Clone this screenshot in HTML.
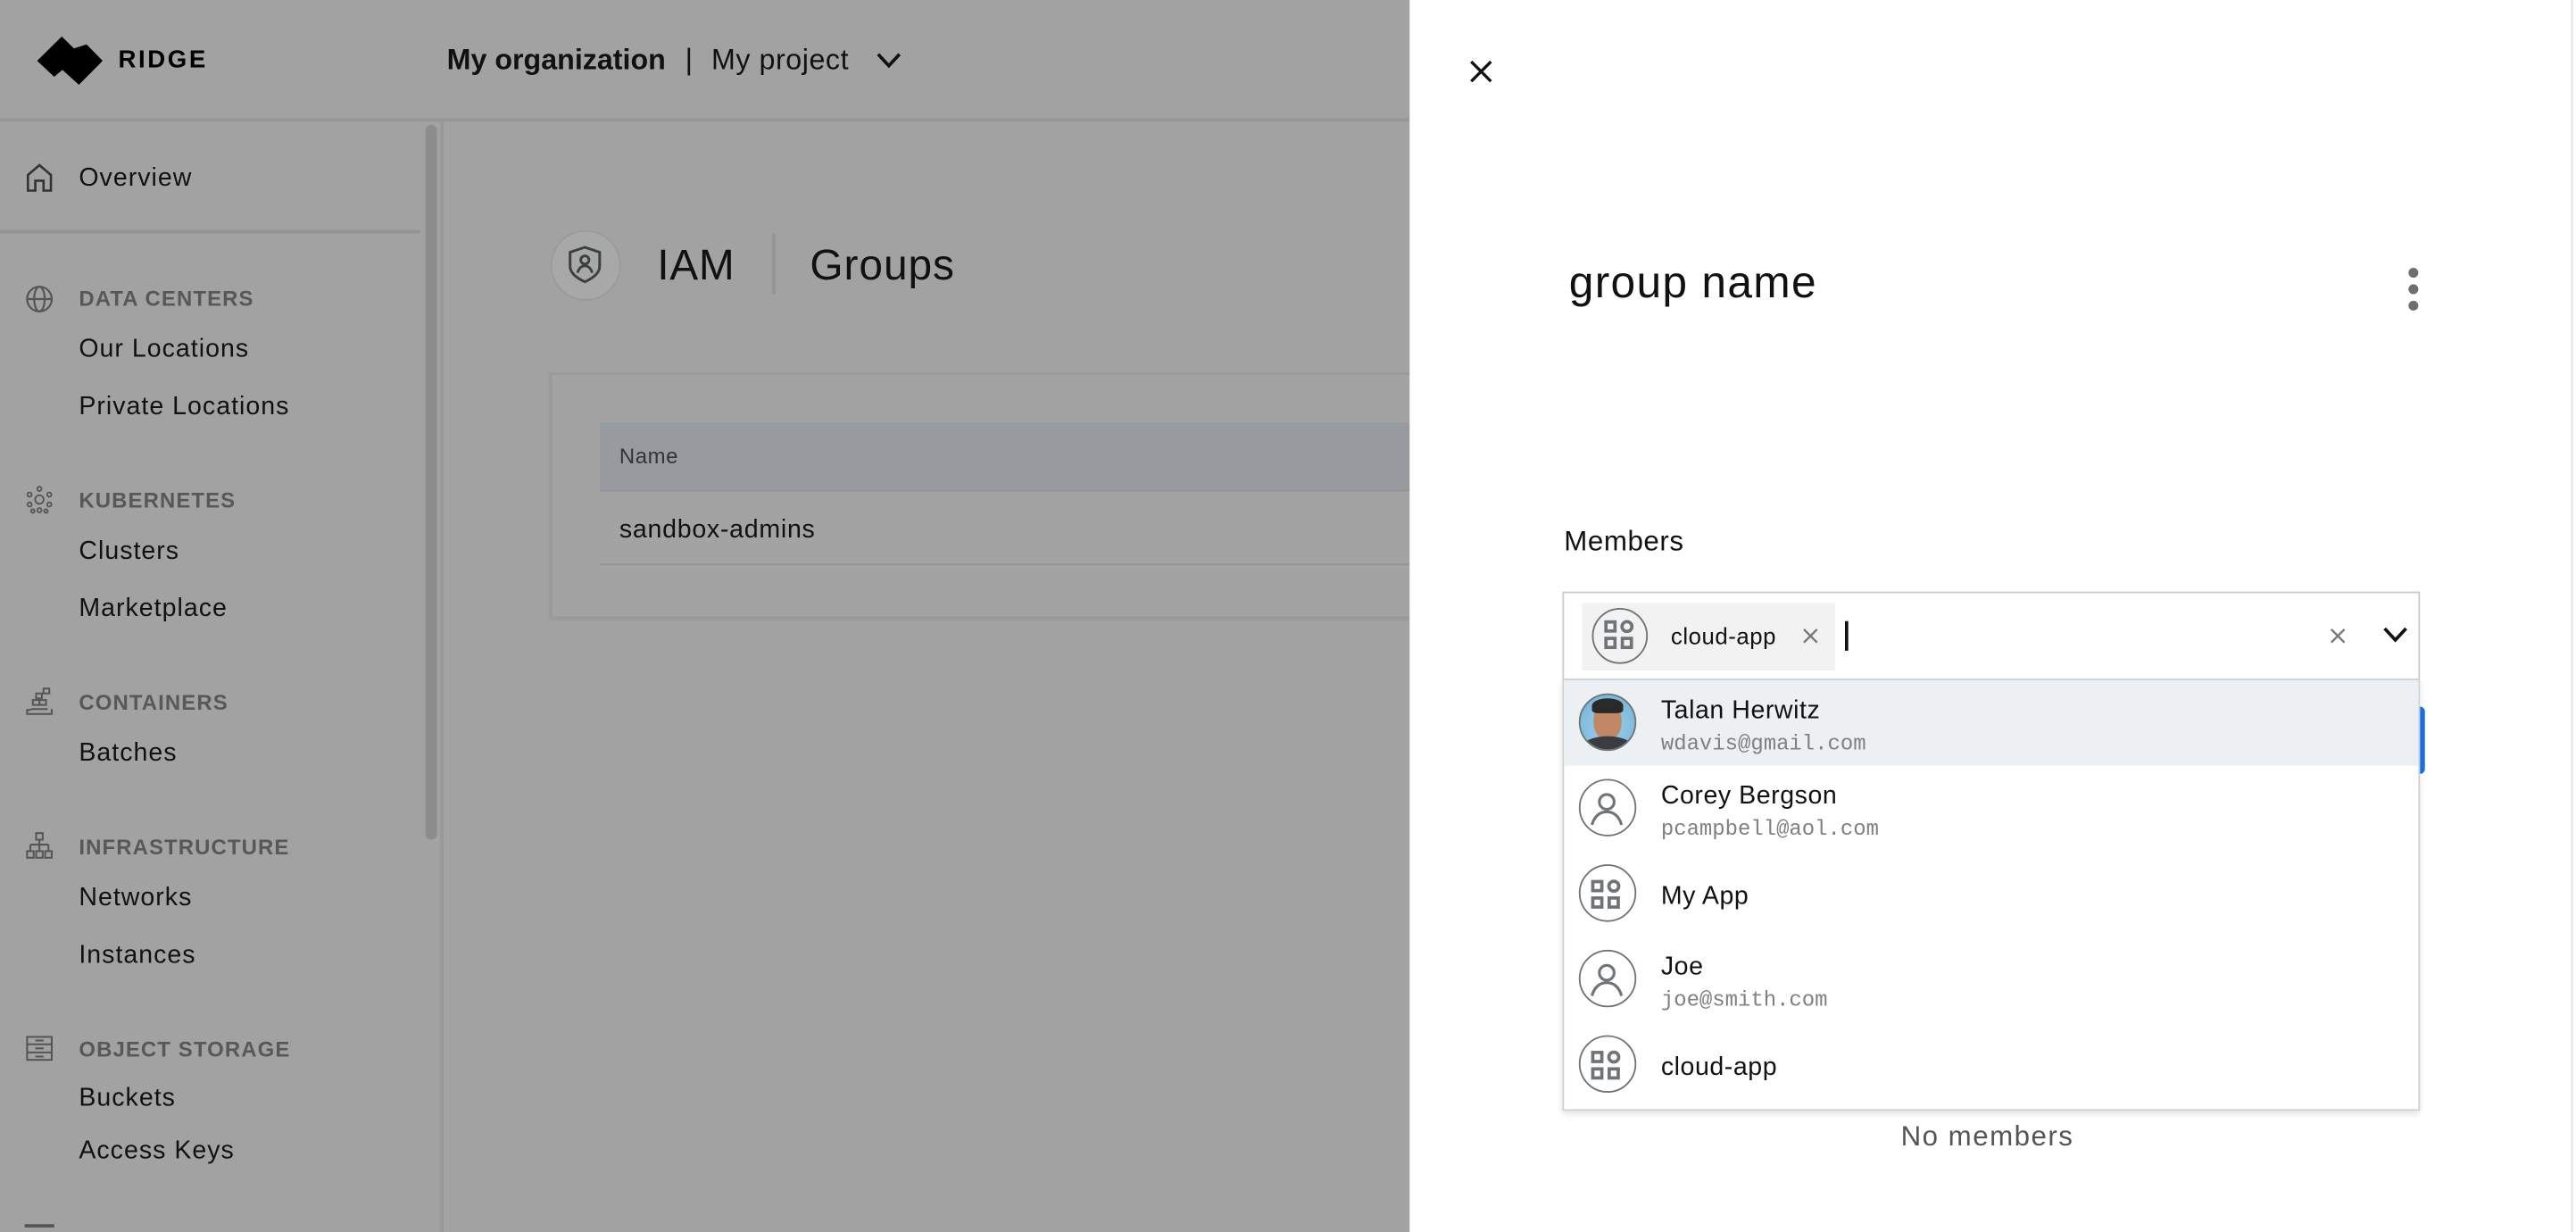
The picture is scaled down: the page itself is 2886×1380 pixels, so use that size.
<!DOCTYPE html>
<html><head><meta charset="utf-8">
<style>
html,body{margin:0;padding:0;width:2886px;height:1380px;overflow:hidden;background:#a2a2a2;}
#s{position:absolute;left:0;top:0;width:1568px;height:750px;transform:scale(1.8406);transform-origin:0 0;font-family:"Liberation Sans",sans-serif;color:#111;}
.a{position:absolute;}
.t{position:absolute;white-space:nowrap;line-height:1;}
.hd{font-size:13px;font-weight:bold;color:#585858;letter-spacing:0.6px;}
.it{font-size:15.5px;color:#111;letter-spacing:0.55px;}
.ic{position:absolute;left:15px;}
.row{position:absolute;left:952px;width:520px;height:52px;}
.av{position:absolute;left:9px;top:8px;width:33px;height:33px;border:1.6px solid #6f7478;border-radius:50%;box-sizing:content-box;}
.nm{position:absolute;left:59px;font-size:15.5px;color:#111;white-space:nowrap;letter-spacing:0.3px;}
.em{position:absolute;left:59px;font-family:"Liberation Mono",monospace;font-size:13px;color:#808080;white-space:nowrap;}
</style></head><body>
<div id="s">
<!-- header -->
<div class="a" style="left:0;top:72px;width:858px;height:1.5px;background:#969696"></div>
<svg class="a" style="left:0;top:0" width="70" height="60"><polygon points="22.6,37 37.6,22.2 45,29.5 52.7,27 62.5,37 48,51.6 38,42.5 33,46.7" fill="#000"/></svg>
<div class="t" style="left:72px;top:29px;font-size:15px;font-weight:bold;letter-spacing:1.4px;color:#000">RIDGE</div>
<div class="t" style="left:272px;top:28px;font-size:17.5px;font-weight:600;color:#111">My organization</div>
<div class="t" style="left:417px;top:27px;font-size:18px;color:#111">|</div>
<div class="t" style="left:433px;top:28px;font-size:17.5px;color:#111;letter-spacing:0.3px">My project</div>
<svg class="a" style="left:533px;top:31px" width="16" height="12"><path d="M1.5 2 L8 9 L14.5 2" stroke="#111" stroke-width="2" fill="none"/></svg>
<!-- sidebar -->
<div class="a" style="left:268px;top:73px;width:1.5px;height:677px;background:#979797"></div>
<div class="a" style="left:259px;top:76px;width:7px;height:435px;border-radius:4px;background:#8c8c8c"></div>
<div class="a" style="left:0;top:140px;width:256px;height:1.5px;background:#939393"></div>
<svg class="ic" style="top:99px" width="18" height="18"><path d="M2 17V7.5L9 1.5L16 7.5V17H11.5V11H6.5V17Z" stroke="#333" stroke-width="1.4" fill="none"/></svg>
<div class="t it" style="left:48px;top:101px">Overview</div>
<svg class="ic" style="top:173px" width="18" height="18"><circle cx="9" cy="9" r="7.5" stroke="#555" stroke-width="1.2" fill="none"/><ellipse cx="9" cy="9" rx="3.2" ry="7.5" stroke="#555" stroke-width="1.2" fill="none"/><path d="M1.5 9H16.5" stroke="#555" stroke-width="1.2"/></svg>
<div class="t hd" style="left:48px;top:175px">DATA CENTERS</div>
<div class="t it" style="left:48px;top:205px">Our Locations</div>
<div class="t it" style="left:48px;top:240px">Private Locations</div>
<svg class="ic" style="top:295px" width="18" height="18" fill="none" stroke="#555" stroke-width="1"><circle cx="9" cy="9" r="2.6"/><circle cx="9" cy="2.5" r="1.3"/><circle cx="9" cy="15.5" r="1.3"/><circle cx="3" cy="6" r="1.3"/><circle cx="15" cy="6" r="1.3"/><circle cx="3" cy="12" r="1.3"/><circle cx="15" cy="12" r="1.3"/><circle cx="5" cy="16" r="1.1"/><circle cx="13" cy="16" r="1.1"/></svg>
<div class="t hd" style="left:48px;top:298px">KUBERNETES</div>
<div class="t it" style="left:48px;top:328px">Clusters</div>
<div class="t it" style="left:48px;top:363px">Marketplace</div>
<svg class="ic" style="top:418px" width="18" height="18" fill="none" stroke="#555" stroke-width="1.1"><path d="M1.5 13.5V16.5H16.5V13.5"/><path d="M1.5 14H4"/><rect x="5" y="8" width="4" height="3"/><rect x="9" y="8" width="4" height="3"/><rect x="7" y="4" width="3.5" height="3"/><rect x="11.5" y="1" width="3.5" height="3"/><path d="M4 13.5H14"/></svg>
<div class="t hd" style="left:48px;top:421px">CONTAINERS</div>
<div class="t it" style="left:48px;top:451px">Batches</div>
<svg class="ic" style="top:506px" width="18" height="18" fill="none" stroke="#555" stroke-width="1.1"><rect x="7" y="1" width="4" height="4"/><path d="M9 5V8M3.5 8H14.5M3.5 8V12M9 8V12M14.5 8V12"/><rect x="1.5" y="12" width="4" height="4"/><rect x="7" y="12" width="4" height="4"/><rect x="12.5" y="12" width="4" height="4"/></svg>
<div class="t hd" style="left:48px;top:509px">INFRASTRUCTURE</div>
<div class="t it" style="left:48px;top:539px">Networks</div>
<div class="t it" style="left:48px;top:574px">Instances</div>
<svg class="ic" style="top:629px" width="18" height="18" fill="none" stroke="#555" stroke-width="1.1"><rect x="1.5" y="2" width="15" height="14"/><path d="M1.5 6.5H16.5M1.5 11.5H16.5M6.5 9H11.5M6.5 14H11.5M6.5 4.2H11.5"/></svg>
<div class="t hd" style="left:48px;top:632px">OBJECT STORAGE</div>
<div class="t it" style="left:48px;top:661px">Buckets</div>
<div class="t it" style="left:48px;top:693px">Access Keys</div>
<div class="a" style="left:15px;top:745px;width:18px;height:1.5px;background:#555"></div>
<!-- main -->
<div class="a" style="left:335px;top:140px;width:41px;height:41px;border-radius:50%;background:#a8a8a8;border:1px solid #9a9a9a"></div>
<svg class="a" style="left:345px;top:149px" width="22" height="24" fill="none" stroke="#3b4042" stroke-width="1.6"><path d="M2 4.5L11 1.5L20 4.5V13C20 17.5 15.5 20.5 11 22.5C6.5 20.5 2 17.5 2 13Z"/><circle cx="11" cy="9.2" r="2.5"/><path d="M6.5 17C7.5 14 9 12.8 11 12.8C13 12.8 14.5 14 15.5 17"/></svg>
<div class="t" style="left:400px;top:148px;font-size:26px;color:#111;letter-spacing:0.4px">IAM</div>
<div class="a" style="left:470px;top:142px;width:1.5px;height:37px;background:#959595"></div>
<div class="t" style="left:493px;top:148px;font-size:26px;color:#111;letter-spacing:0.5px">Groups</div>
<div class="a" style="left:335px;top:227px;width:530px;height:147px;background:#a3a3a3;border:1px solid #989898;box-shadow:0 1px 2px rgba(0,0,0,0.08)"></div>
<div class="a" style="left:365px;top:257px;width:500px;height:41px;background:#979b9f"></div>
<div class="t" style="left:377px;top:271px;font-size:13px;color:#333;letter-spacing:0.3px">Name</div>
<div class="a" style="left:365px;top:298px;width:500px;height:1px;background:#949494"></div>
<div class="t" style="left:377px;top:315px;font-size:15.5px;color:#111;letter-spacing:0.4px">sandbox-admins</div>
<div class="a" style="left:365px;top:343px;width:500px;height:1px;background:#949494"></div>
<!-- panel -->
<div class="a" style="left:858px;top:0;width:710px;height:750px;background:#fff"></div>
<div class="a" style="left:1565px;top:0;width:1px;height:750px;background:#e0e0e0"></div>
<svg class="a" style="left:894px;top:36px" width="15" height="15"><path d="M1.5 1.5L13.5 13.5M13.5 1.5L1.5 13.5" stroke="#111" stroke-width="1.8"/></svg>
<div class="t" style="left:955px;top:159px;font-size:27px;color:#111;letter-spacing:0.7px">group name</div>
<div class="a" style="left:1466px;top:163px;width:6px;height:6px;border-radius:50%;background:#6b7075"></div>
<div class="a" style="left:1466px;top:173px;width:6px;height:6px;border-radius:50%;background:#6b7075"></div>
<div class="a" style="left:1466px;top:183px;width:6px;height:6px;border-radius:50%;background:#6b7075"></div>
<div class="t" style="left:952px;top:321px;font-size:17px;font-weight:500;color:#111;letter-spacing:0.3px">Members</div>
<div class="a" style="left:1472px;top:430px;width:4px;height:41px;background:#1a73e8;border-radius:0 3px 3px 0"></div>
<div class="t" style="left:1157px;top:683px;font-size:17px;color:#555;letter-spacing:0.8px">No members</div>
<!-- input -->
<div class="a" style="left:951px;top:360px;width:520px;height:52px;border:1px solid #c8cacc;background:#fff"></div>
<div class="a" style="left:963px;top:367px;width:154px;height:41px;background:#f2f2f2"></div>
<div class="a" style="left:969px;top:370px;width:32px;height:32px;border:1.5px solid #6f7478;border-radius:50%"></div>
<svg class="a" style="left:976px;top:377px" width="20" height="20" fill="none" stroke="#6f7478" stroke-width="2"><rect x="1.5" y="1.5" width="5.5" height="5.5"/><circle cx="14.3" cy="4.3" r="3"/><rect x="1.5" y="11.5" width="5.5" height="5.5"/><rect x="11.5" y="11.5" width="5.5" height="5.5"/></svg>
<div class="t" style="left:1017px;top:380px;font-size:14px;color:#111;letter-spacing:0.3px">cloud-app</div>
<svg class="a" style="left:1097px;top:382px" width="10" height="10"><path d="M1 1L9 9M9 1L1 9" stroke="#777" stroke-width="1.3"/></svg>
<div class="a" style="left:1123px;top:378px;width:1.5px;height:18px;background:#111"></div>
<svg class="a" style="left:1418px;top:382px" width="10" height="10"><path d="M1 1L9 9M9 1L1 9" stroke="#777" stroke-width="1.3"/></svg>
<svg class="a" style="left:1450px;top:381px" width="16" height="11"><path d="M1.5 1.5L8 8.5L14.5 1.5" stroke="#111" stroke-width="2" fill="none"/></svg>
<!-- dropdown -->
<div class="a" style="left:951px;top:413px;width:520px;height:261px;border:1px solid #cfd1d3;background:#fff;box-shadow:0 2px 4px rgba(0,0,0,0.12)"></div>
<div class="a" style="left:952px;top:414px;width:520px;height:52px;background:#edf0f2"></div>
<div class="row" style="top:414px">
 <div class="av" style="overflow:hidden;background:radial-gradient(circle at 50% 60%,#9fd0ea,#6fb0d6)">
  <div class="a" style="left:8px;top:5px;width:17px;height:22px;border-radius:45%;background:#c08864"></div>
  <div class="a" style="left:7px;top:2px;width:19px;height:9px;border-radius:50% 50% 20% 20%;background:#2a2a2a"></div>
  <div class="a" style="left:1px;top:25px;width:31px;height:14px;border-radius:50% 50% 0 0;background:#3a3d40"></div>
 </div>
 <div class="nm" style="top:10px">Talan Herwitz</div>
 <div class="em" style="top:31px">wdavis@gmail.com</div>
</div>
<div class="row" style="top:466px">
 <div class="av"></div>
 <svg class="a" style="left:14px;top:14px" width="26" height="26" fill="none" stroke="#6f7478" stroke-width="1.7"><circle cx="12" cy="8" r="4.5"/><path d="M3 22C4.5 16.5 8 14 12 14C16 14 19.5 16.5 21 22"/></svg>
 <div class="nm" style="top:10px">Corey Bergson</div>
 <div class="em" style="top:31px">pcampbell@aol.com</div>
</div>
<div class="row" style="top:518px">
 <div class="av"></div>
 <svg class="a" style="left:16px;top:17px" width="20" height="20" fill="none" stroke="#6f7478" stroke-width="2"><rect x="1.5" y="1.5" width="5.5" height="5.5"/><circle cx="14.3" cy="4.3" r="3"/><rect x="1.5" y="11.5" width="5.5" height="5.5"/><rect x="11.5" y="11.5" width="5.5" height="5.5"/></svg>
 <div class="nm" style="top:19px">My App</div>
</div>
<div class="row" style="top:570px">
 <div class="av"></div>
 <svg class="a" style="left:14px;top:14px" width="26" height="26" fill="none" stroke="#6f7478" stroke-width="1.7"><circle cx="12" cy="8" r="4.5"/><path d="M3 22C4.5 16.5 8 14 12 14C16 14 19.5 16.5 21 22"/></svg>
 <div class="nm" style="top:10px">Joe</div>
 <div class="em" style="top:31px">joe@smith.com</div>
</div>
<div class="row" style="top:622px">
 <div class="av"></div>
 <svg class="a" style="left:16px;top:17px" width="20" height="20" fill="none" stroke="#6f7478" stroke-width="2"><rect x="1.5" y="1.5" width="5.5" height="5.5"/><circle cx="14.3" cy="4.3" r="3"/><rect x="1.5" y="11.5" width="5.5" height="5.5"/><rect x="11.5" y="11.5" width="5.5" height="5.5"/></svg>
 <div class="nm" style="top:19px">cloud-app</div>
</div>
</div>
</body></html>
